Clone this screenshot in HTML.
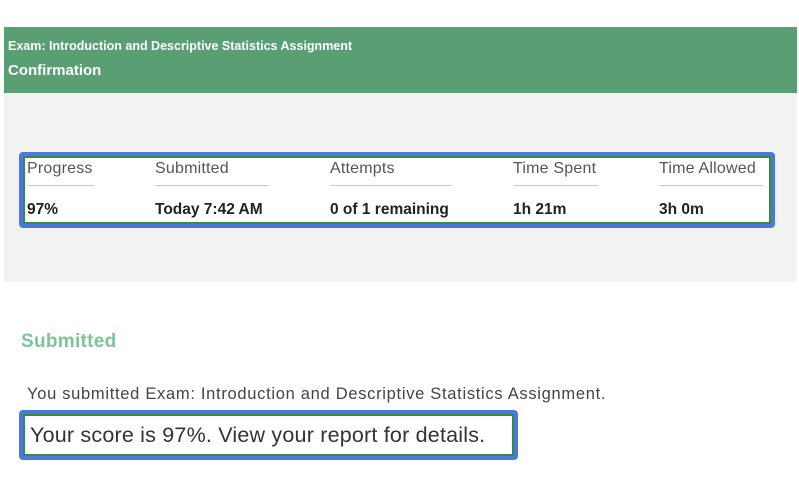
<!DOCTYPE html>
<html><head><style>
body{margin:0;width:799px;height:496px;background:#fff;font-family:"Liberation Sans",sans-serif;position:relative;overflow:hidden}
.hdr{position:absolute;left:4px;top:27px;width:793px;height:66px;background:#5a9f73;color:#fff;font-weight:bold}
.gray{position:absolute;left:4px;top:93px;width:793px;height:189px;background:#f2f2f2}
.box{position:absolute;left:19px;top:152px;width:748px;height:68px;border:4px solid #4a77e0;border-radius:4px;background:#fff;box-shadow:inset 0 0 0 2px #3a8a3a}
.col{position:absolute;top:4px;font-size:16px;color:#555;letter-spacing:0.2px}
.col .l{padding-bottom:7px;border-bottom:1px solid #ccc;display:inline-block}
.col .v{margin-top:15px;font-weight:bold;color:#222;font-size:15.5px;letter-spacing:0}
.sc{position:absolute;left:19px;top:410px;width:491px;height:42px;border:4px solid #4a77e0;border-radius:4px;box-shadow:inset 0 0 0 2px #3a8a3a;font-size:21.5px;color:#333;line-height:42px}
</style></head><body>
<div class="hdr"><div style="position:absolute;left:4px;top:12px;font-size:12.5px">Exam: Introduction and Descriptive Statistics Assignment</div><div style="position:absolute;left:4px;top:35px;font-size:15px">Confirmation</div></div>
<div class="gray"></div>
<div class="box">
<div class="col" style="left:4px"><span class="l" style="width:68px">Progress</span><div class="v">97%</div></div>
<div class="col" style="left:132px"><span class="l" style="width:114px">Submitted</span><div class="v">Today 7:42 AM</div></div>
<div class="col" style="left:307px"><span class="l" style="width:122px">Attempts</span><div class="v">0 of 1 remaining</div></div>
<div class="col" style="left:490px"><span class="l" style="width:86px">Time Spent</span><div class="v">1h 21m</div></div>
<div class="col" style="left:636px"><span class="l" style="width:104px">Time Allowed</span><div class="v">3h 0m</div></div>
</div>
<div style="position:absolute;left:21px;top:331px;font-size:19px;font-weight:bold;color:#7cc49a;letter-spacing:0.3px">Submitted</div>
<div style="position:absolute;left:27px;top:385px;font-size:16.5px;color:#444;letter-spacing:0.7px">You submitted Exam: Introduction and Descriptive Statistics Assignment.</div>
<div class="sc"><span style="margin-left:7px;letter-spacing:0.2px">Your score is 97%. View your report for details.</span></div>
</body></html>
